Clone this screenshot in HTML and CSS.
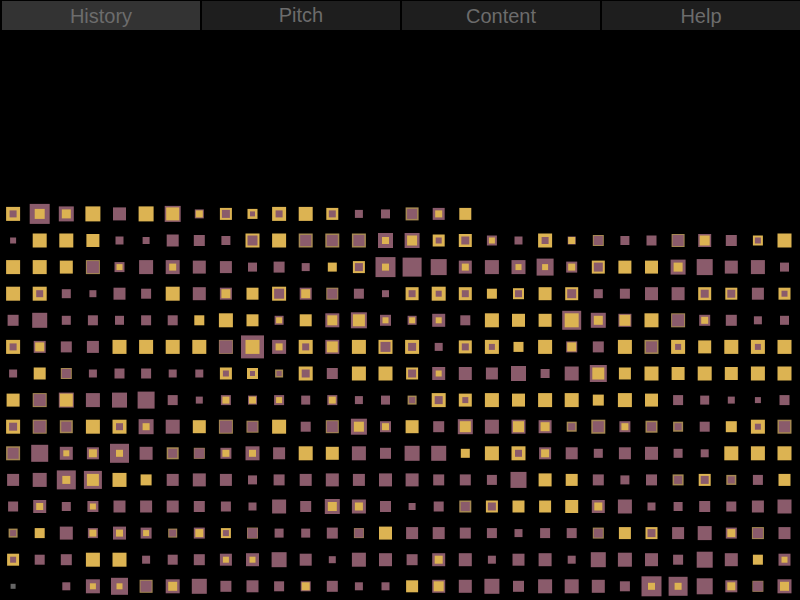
FILE: index.html
```html
<!DOCTYPE html>
<html lang="en">
<head>
<meta charset="utf-8">
<title>History</title>
<link rel="stylesheet" href="styles.css">
</head>
<body>
<nav class="tabs">
  <div class="tab tab-active">History</div>
  <div class="tab tab-raised">Pitch</div>
  <div class="tab">Content</div>
  <div class="tab">Help</div>
</nav>
<svg id="grid" class="grid" width="800" height="400" viewBox="0 0 800 400"></svg>
<script src="grid.js"></script>
</body>
</html>
```
FILE: styles.css
```css
html, body {
  margin: 0;
  padding: 0;
  background: #000;
}
body {
  width: 800px;
  height: 600px;
  overflow: hidden;
  display: flex;
  flex-direction: column;
  font-family: "Liberation Sans", Arial, sans-serif;
}
.tabs {
  display: flex;
  flex: none;
  height: 29px;
  padding-top: 1px;
}
.tab {
  flex: 1;
  margin-left: 2px;
  padding-top: 2px;
  display: flex;
  align-items: center;
  justify-content: center;
  background: #1e1e1e;
  color: #6c6c6c;
  font-size: 20px;
  line-height: 27px;
}
.tab-active {
  background: #333;
}
.tab-raised {
  padding-top: 0;
}
.grid {
  display: block;
  flex: none;
  margin-top: auto;
}
.y { fill: #dcb352; }
.t { fill: #a58852; }
.m { fill: #8a5b6b; }
.g { fill: #666; }
```
FILE: grid.js
```js
var rows = [
"y14.7 m20.10 m15.9 y15 m13 y15 m16.13 m9.7 y12.8 y10.5 y14.7 y14 y12.7 m8 m9 y13.10 m12.7 y12 _ _ _ _ _ _ _ _ _ _ _ _",
"m6 y14 y14 y13 m8 m7 m12 m11 m9 y14.10 y14 y14.11 y14.11 y14.11 m15.7 m15.10 y12.6 y13.8 m10.6 m8 y14.7 m8.7 y11.9 m9 m10 y13.11 m13.10 m11 y10.6 y14",
"y14 y14 y13 y14.12 m10.6 m14 m14.7 m13 m12 m9 m11 m8 y9 y12.8 m20.7 m19 m16 m13.7 m14 m14.6 m17.6 m11.7 y13.9 y13 y13 m15.9 m16 m13 m14 m9",
"y14 y14.7 m9 m7 m12 m10 y14 m13 m12.9 y12 y14.10 m12.9 y12.10 m10 m7 y13.7 y14.6 y13.7 y10 y11.7 y13 y13.9 m9 m10 m13 m13 y13.8 y12.8 m12 y12.6",
"m11 m15 m9 m10 m9 m10 m10 y10 y14 y12 m9.6 y12 m14.10 m16.12 m11.6 m9.6 m13.6 m10 y14 y13 y13 m19.14 m15.9 m13.11 y14 y14.12 m11.7 m11 m8 m9",
"y14.7 m12.9 m11 m12 y14 y14 y14 y14 y14.13 m23.14 m14.7 y14.7 m14.11 y14 y14.10 y14.8 m8 y13.7 y14.6 y10 y14 m11.9 m11 y14 y14.11 y14.6 y13 y14 y14.6 y14",
"m8 y12 y11.9 m8 m10 m10 m8 m8 y12.6 y11.5 y8.5 y14.8 m11 y14 y14 y12.8 m13.6 m13 m12 m15 m9 m14 m17.12 y12 y14 y13 y14 y13 y14 y14",
"y13 y14.12 m15.13 m14 m15 m17 m10 m7 m10.7 m9.7 m10.6 m9 m10.7 m8 m9 y9.6 y14.8 y13.6 y14 y13 y14 y14 y11 y14 y13 m10 m9 m7 m6 m10",
"y14.8 y14.12 y13.10 y14 y14.7 m15.7 m14 y13 y14.12 y12.10 y14 m10 y13.11 m16.10 m11.7 y13 m11 m15.11 m14 m14.11 m13.9 y10.7 y14.11 m11.7 y12.9 y10.7 m10 y11 y14.6 y14.11",
"y14.11 m17 m13.6 m12.8 m19.7 m13 y12.9 y11.10 m11.7 m14.7 m12 y14 y13 m14 m11 m15 m15 y9 y14 y14.7 m12.8 m12 m9 m12 m13 m9 m8 y14 y14 y14",
"m12 m14 m19.8 m18.12 y14 y11 m12 m13 m12 m9 m11 m12 m13 m12 m13 m13 m11 m11 m10 m16 y13 y12 m11 m9 m11 y11.8 y12.8 y10.7 m10 y12",
"m10 m13.7 m9 m11.6 m12 m12 m12 m11 m10 m8 m14 m11 m15.9 m14.8 m11 m7 m10 y12.9 y12.8 y12 y12 y13 m13.8 m14 m8 m9 m11 m10 m12 m14",
"y9.6 y10 m13 m10.7 m13.7 m11.6 y9.7 m11.8 y10.6 y11.10 m9 m9 m11 y10.9 y13 m12 m12 m11 m10 m8 m10 m10 y11.9 y12 y12.8 m12 m14 m11.8 y12.10 m12",
"y12.6 m10 m11 y14 y14 m8 m10 m11 m12.6 m13.6 m15 m12 m7 m14 m13 m11 m13.8 m13 m8 m12 m13 m8 m15 m14 m13 m10 m16 m13 y10 m12.6",
"g5 _ m8 m14.6 m17.6 y13.11 m14.9 m15 m11 m12 m10 m10.8 m11 m8 m8 y12 m13.10 m13 m15 m11 m14 m14 m13 m10 m20.7 m19.7 m16 m12.8 y11.10 m14.9"
];

var SVG_NS = "http://www.w3.org/2000/svg";
var CELL = 26.6;
var COL_OFFSET = 13.1;
var ROW_OFFSET = 13.9;
var grid = document.getElementById("grid");

function addSquare(cx, cy, size, colour) {
  var rect = document.createElementNS(SVG_NS, "rect");
  rect.setAttribute("x", cx - size / 2);
  rect.setAttribute("y", cy - size / 2);
  rect.setAttribute("width", size);
  rect.setAttribute("height", size);
  rect.setAttribute("class", colour);
  grid.appendChild(rect);
}

rows.forEach(function (row, j) {
  row.split(" ").forEach(function (cell, i) {
    if (cell === "_") return;
    var kind = cell.charAt(0);
    var sizes = cell.slice(1).split(".");
    var outer = +sizes[0];
    var inner = +sizes[1];
    var cx = COL_OFFSET + CELL * i;
    var cy = ROW_OFFSET + CELL * j;
    var thinRing = kind === "y" && inner && outer - inner <= 3;
    addSquare(cx, cy, outer, thinRing ? "t" : kind);
    if (inner) {
      addSquare(cx, cy, inner, kind === "y" ? "m" : "y");
    }
  });
});
```
